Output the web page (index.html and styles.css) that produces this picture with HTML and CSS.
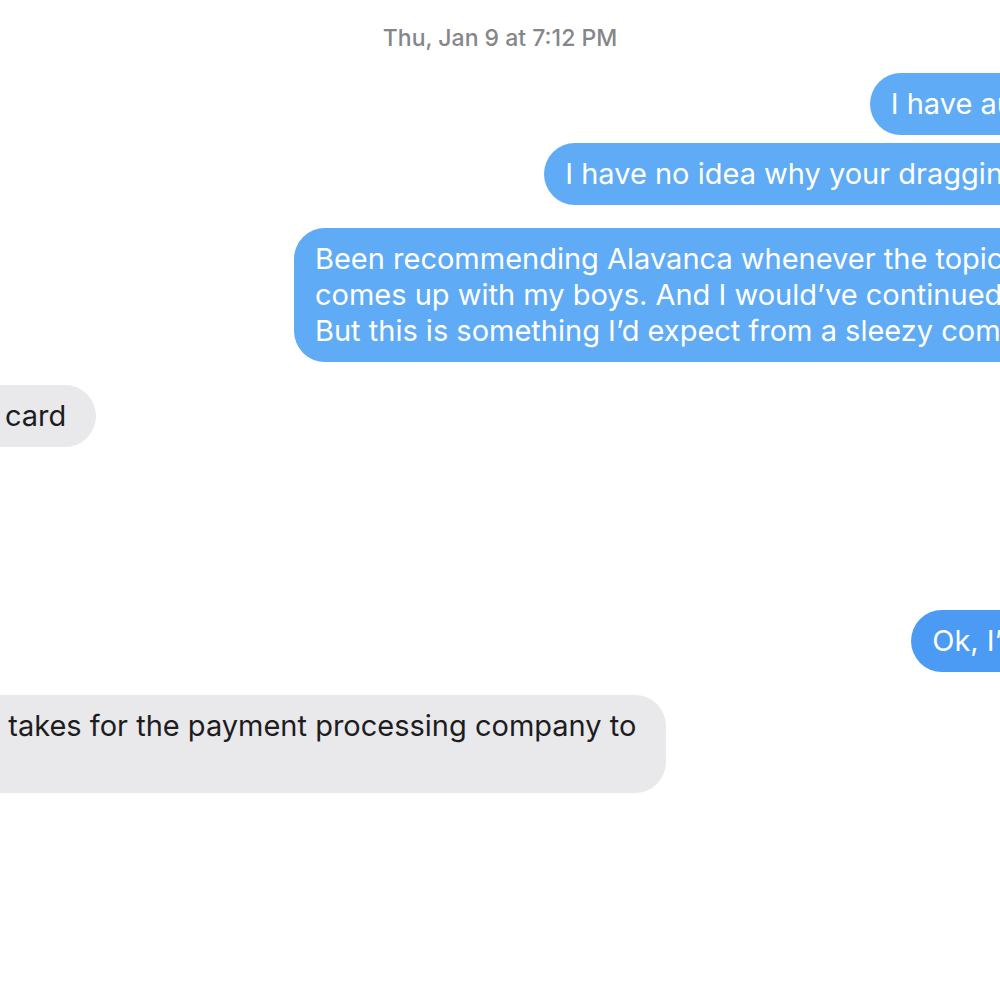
FILE: index.html
```html
<!DOCTYPE html>
<html lang="en">
<head>
<meta charset="utf-8">
<title>Messages</title>
<link rel="stylesheet" href="styles.css">
</head>
<body>
<div class="screen">
  <div class="thread">
    <div class="stamp">Thu, Jan 9 at 7:12 PM</div>
    <div class="row out"><div class="bubble sent">I have auto pay.</div></div>
    <div class="row out tight"><div class="bubble sent">I have no idea why your dragging it out.</div></div>
    <div class="row out"><div class="bubble sent">Been recommending Alavanca whenever the topic of loan<br>comes up with my boys. And I would’ve continued to.<br>But this is something I’d expect from a sleezy company.</div></div>
    <div class="row in"><div class="bubble recv">Please, try updating your card</div></div>
    <div class="row out later"><div class="bubble sent now">Ok, I’ll wait...</div></div>
    <div class="row in"><div class="bubble recv">It depends on how long it takes for the payment processing company to<br>process the refund</div></div>
  </div>
</div>
</body>
</html>
```
FILE: styles.css
```css
* { box-sizing: border-box; }
html, body { margin: 0; padding: 0; background: #ffffff; }
.screen {
  width: 1000px;
  height: 1000px;
  overflow: hidden;
  position: relative;
}
.thread {
  width: 2000px;
  margin-left: -500px;
  display: flex;
  flex-direction: column;
  font-family: Inter, "Noto Sans", sans-serif;
  padding-top: 25px;
}
.stamp {
  text-align: center;
  font-size: 23px;
  line-height: 26px;
  color: #86868a;
  margin-bottom: 22px;
  font-weight: 500;
}
.row { display: flex; margin-top: 23px; }
.stamp + .row { margin-top: 0; }
.row.tight { margin-top: 8px; }
.row.later { margin-top: 163px; }
.row.out { justify-content: flex-end; padding-right: 373px; }
.row.in { justify-content: flex-start; padding-left: 133px; }
.bubble {
  font-size: 29px;
  line-height: 36px;
  padding: 13px 21px;
  border-radius: 31px;
  white-space: nowrap;
}
.sent { background: #5fabf6; color: #ffffff; }
.sent.now { background: #4b9bf5; }
.recv { background: #e9e9eb; color: #1d1d1f; padding-right: 30px; }
```
